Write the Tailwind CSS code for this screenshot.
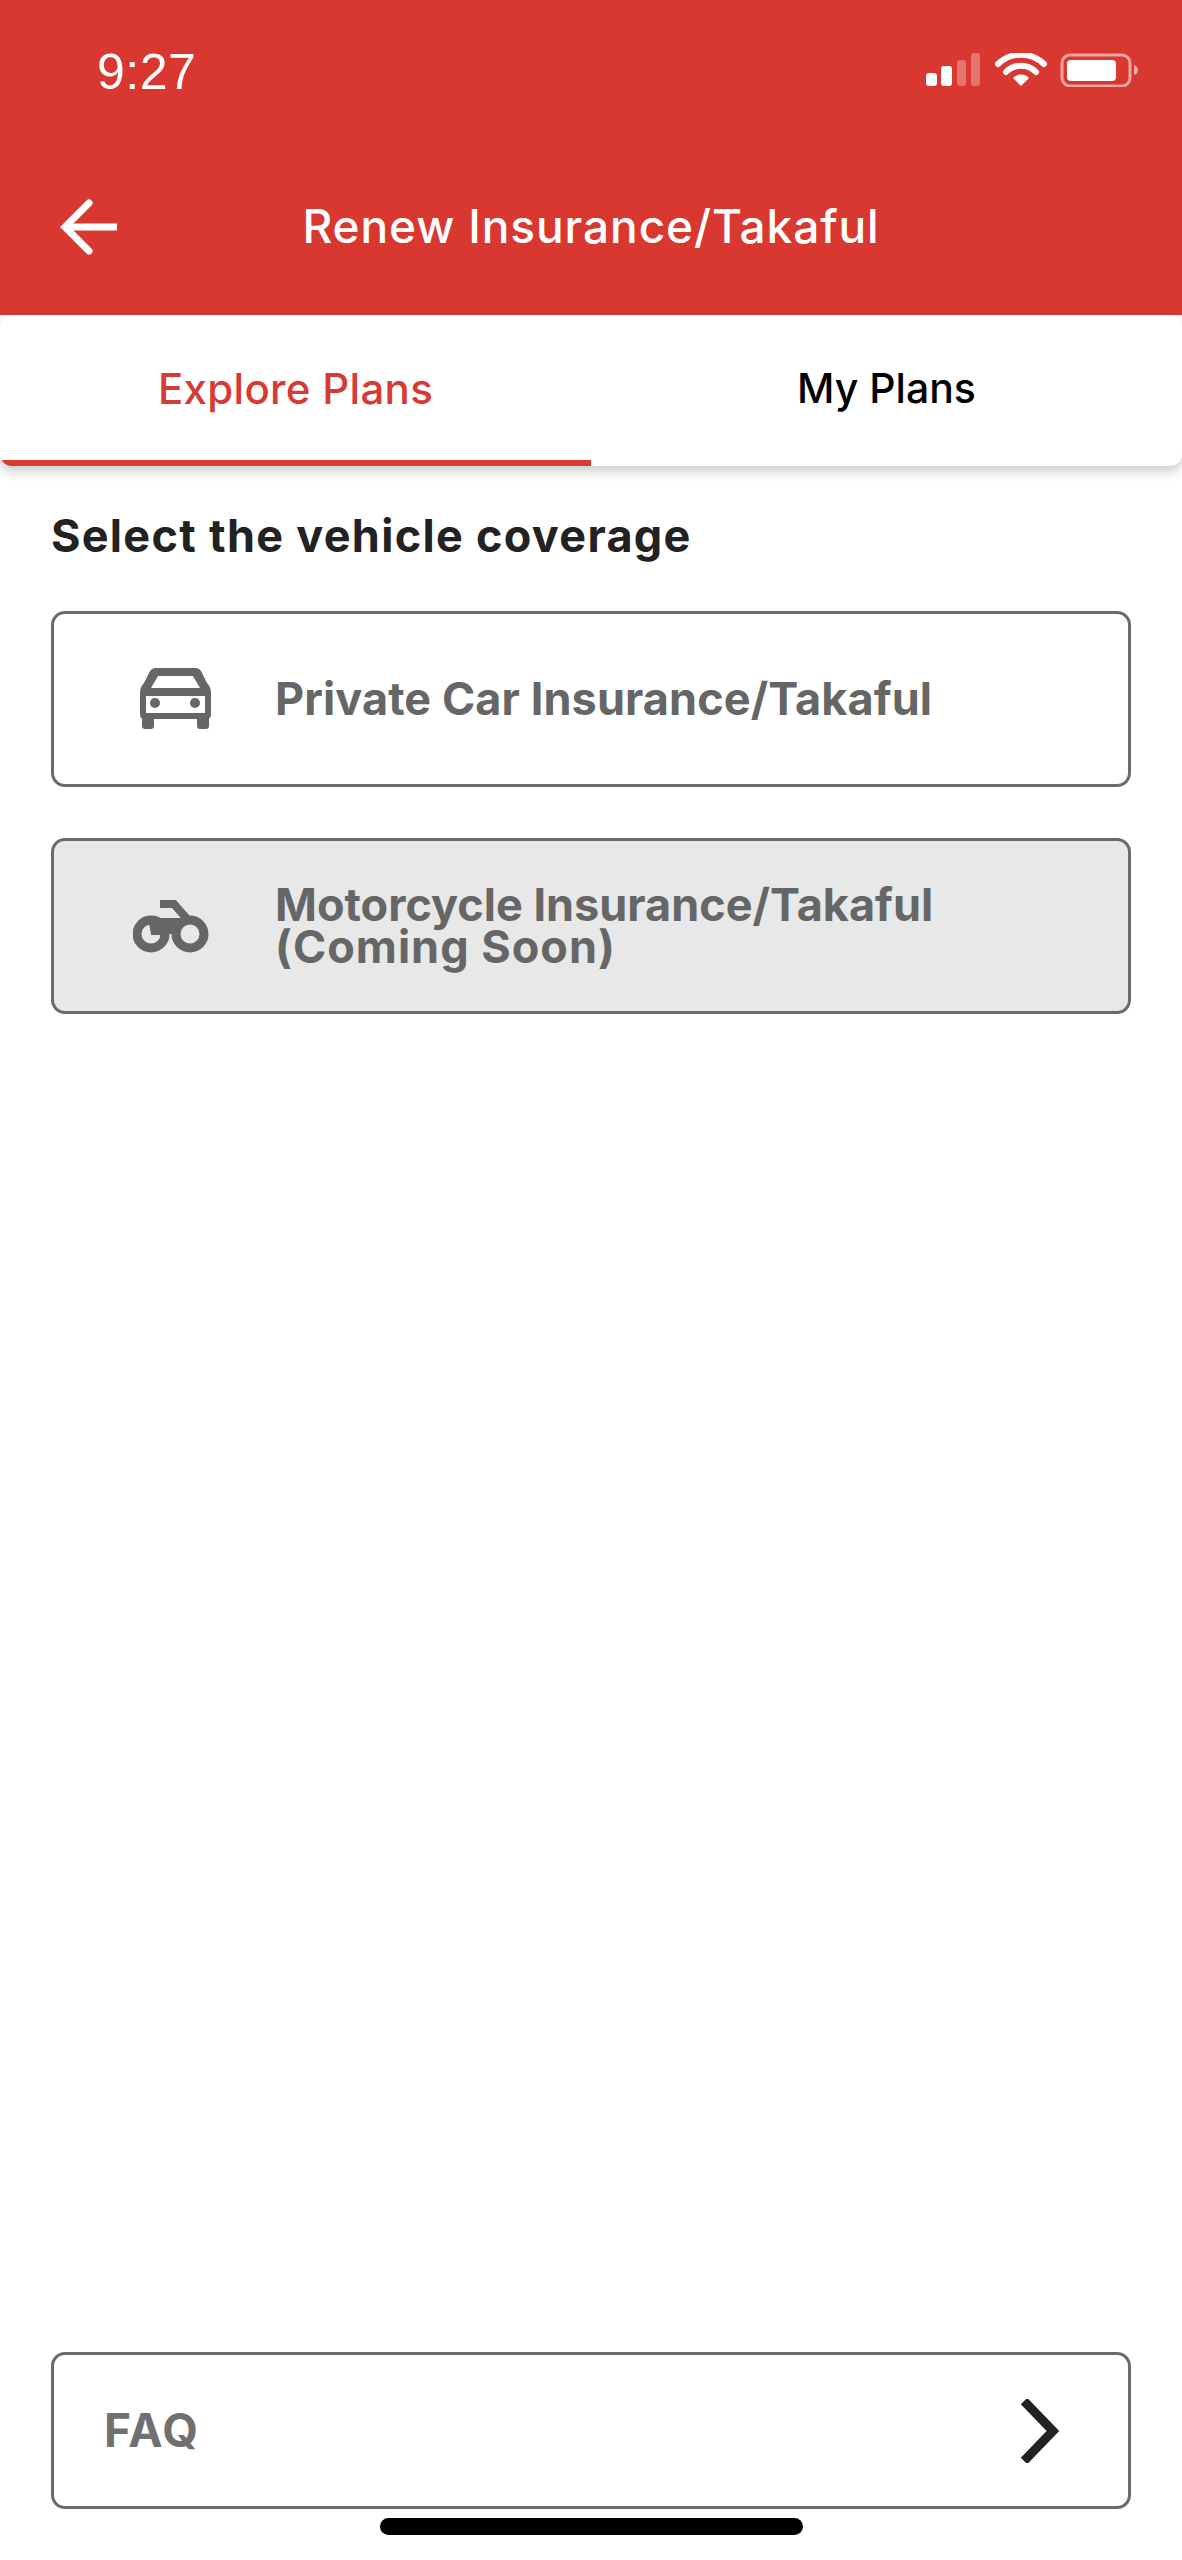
<!DOCTYPE html>
<html lang="en">
<head>
    <meta charset="UTF-8">
    <meta name="viewport" content="width=device-width, initial-scale=1.0">
    <title>Renew Insurance/Takaful</title>
    <script src="https://cdn.jsdelivr.net/npm/@tailwindcss/browser@4"></script>
</head>
<body class="bg-white">
    <div class="w-[1182px] h-[2560px] flex flex-col font-['Inter',sans-serif] overflow-hidden">
        <!-- Header -->
        <header class="h-[315px] shrink-0 bg-[#d93831] text-white flex flex-col">
            <!-- Status bar -->
            <div class="h-[184px] shrink-0 flex items-start justify-between pl-[97px] pr-[42px] pt-[46px]">
                <span class="font-['Liberation_Sans',sans-serif] text-[50px] leading-[52px] tracking-[0.5px]">9:27</span>
                <svg class="mt-[7px]" width="214" height="34" viewBox="0 0 214 34" fill="white">
                    <rect x="0" y="20" width="11" height="13" rx="3"/>
                    <rect x="15" y="13" width="11" height="20" rx="3"/>
                    <rect x="31" y="7" width="9" height="26" rx="3" fill-opacity=".3"/>
                    <rect x="45" y="0" width="9" height="33" rx="3" fill-opacity=".3"/>
                    <path d="M72 11a33 33 0 0 1 46 0" fill="none" stroke="white" stroke-width="6" stroke-linecap="round"/>
                    <path d="M80 19a21 21 0 0 1 30 0" fill="none" stroke="white" stroke-width="6" stroke-linecap="round"/>
                    <path d="M87 25a11 11 0 0 1 16 0L95 33Z"/>
                    <rect x="136" y="2" width="68" height="31" rx="8" fill="none" stroke="white" stroke-opacity=".55" stroke-width="3"/>
                    <rect x="141" y="7" width="49" height="21" rx="4"/>
                    <path d="M208 12c3 1 4 3 4 5s-1 4-4 5Z" fill-opacity=".6"/>
                </svg>
            </div>
            <!-- Title row -->
            <div class="relative flex items-center justify-center h-[84px]">
                <svg class="absolute left-[60px] top-[15px]" width="60" height="56" viewBox="0 0 60 56" fill="none" stroke="white" stroke-width="7" stroke-linecap="round" stroke-linejoin="miter">
                    <path d="M29 4 5 28l24 24"/>
                    <path d="M6 28h51" stroke-linecap="butt"/>
                </svg>
                <h1 class="text-[46px] leading-[52px] font-medium tracking-[0.9px]">Renew Insurance/Takaful</h1>
            </div>
        </header>

        <!-- Tabs -->
        <div class="h-[151px] shrink-0 bg-white rounded-[12px] shadow-[0_5px_12px_rgba(0,0,0,0.22)] grid grid-cols-2 overflow-hidden relative">
            <div class="flex items-center justify-center border-b-[6px] border-[#d93831] text-[#d63a35] text-[42px] font-medium tracking-[0.3px] pt-[2px]">Explore Plans</div>
            <div class="flex items-center justify-center border-b-[6px] border-transparent text-black text-[41px] font-medium pt-[2px]">My Plans</div>
        </div>

        <!-- Content -->
        <main class="flex-1 flex flex-col px-[51px] pt-[46px] pb-[51px]">
            <h2 class="text-[45px] leading-[48px] font-bold text-[#222222] tracking-[1.3px]">Select the vehicle coverage</h2>

            <button class="mt-[51px] h-[176px] shrink-0 flex items-center border-[3px] border-[#6b6b6b] rounded-[14px] bg-white text-left">
                <span class="w-[221px] shrink-0 flex justify-start pl-[85px]">
                    <svg width="73" height="62" viewBox="0 0 73 62" fill="#666666">
                        <path fill-rule="evenodd" d="M17 0H56Q61 0 63 5L68 15Q72 19 72 25V46Q72 51 68 51H5Q1 51 1 46V25Q1 19 5 15L10 5Q12 0 17 0ZM19 8 12 20H61L54 8ZM7 28V45H66V28Z"/>
                        <circle cx="16" cy="35" r="5"/>
                        <circle cx="56" cy="35" r="5"/>
                        <rect x="3" y="48" width="12" height="13" rx="3"/>
                        <rect x="58" y="48" width="12" height="13" rx="3"/>
                    </svg>
                </span>
                <span class="text-[45px] leading-[42px] font-bold tracking-[0.1px] text-[#666666]">Private Car Insurance/Takaful</span>
            </button>

            <button class="mt-[51px] h-[176px] shrink-0 flex items-center border-[3px] border-[#6b6b6b] rounded-[14px] bg-[#e8e8e8] text-left">
                <span class="w-[221px] shrink-0 flex justify-start pl-[79px]">
                    <svg width="76" height="53" viewBox="0 0 76 53" fill="none" stroke="#666666">
                        <circle cx="18" cy="34" r="14" stroke-width="9"/>
                        <circle cx="57" cy="34" r="14" stroke-width="9"/>
                        <path d="M27 4H41L55 20" stroke-width="8"/>
                        <path d="M15 18H53L44 34H18Z" fill="#666666" stroke="none"/>
                        <path d="M18 32H32" stroke-width="6"/>
                    </svg>
                </span>
                <span class="text-[45px] leading-[42px] font-bold text-[#666666]">Motorcycle Insurance/Takaful<br><span class="tracking-[1px]">(Coming Soon)</span></span>
            </button>

            <!-- FAQ -->
            <button class="mt-auto h-[157px] shrink-0 flex items-center justify-between border-[3px] border-[#6b6b6b] rounded-[14px] pl-[50px] pr-[68px] bg-white">
                <span class="text-[46px] font-bold tracking-[1.5px] text-[#707070]">FAQ</span>
                <svg width="40" height="64" viewBox="0 0 40 64" fill="none" stroke="#222222" stroke-width="9">
                    <path d="M4 2 33 32 4 62"/>
                </svg>
            </button>
        </main>

        <!-- Home indicator -->
        <div class="relative h-0">
            <div class="absolute left-[380px] -top-[42px] w-[423px] h-[17px] rounded-full bg-black"></div>
        </div>
    </div>
</body>
</html>
